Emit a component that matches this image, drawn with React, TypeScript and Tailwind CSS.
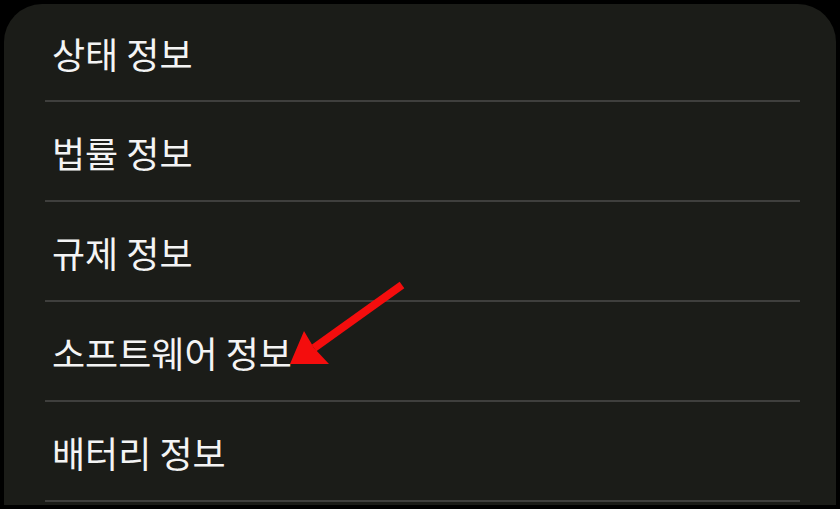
import React from "react";

const items = ["상태 정보", "법률 정보", "규제 정보", "소프트웨어 정보", "배터리 정보"];

export default function App() {
  return (
    <div className="relative w-[840px] h-[509px] bg-black overflow-hidden pt-[4px] pl-[4px]">
      <div className="w-[832px] h-[501px] rounded-t-[38px] bg-[#1b1c18] pl-[41px] pr-[36px]">
        {items.map((t, i) => (
          <div
            key={t}
            className={`flex items-center border-b-2 border-[#3f3f3d] pl-[7px] ${i === 0 ? "h-[98px]" : "h-[100px]"}`}
          >
            <span
              className="text-[36px] leading-none text-[#f4f4f4] pt-[2px]"
              style={{ fontFamily: '"Noto Sans CJK KR", "Noto Sans", sans-serif' }}
            >
              {t}
            </span>
          </div>
        ))}
      </div>
      <svg className="absolute left-0 top-0" width="840" height="509" viewBox="0 0 840 509">
        <line x1="402" y1="285" x2="314" y2="348" stroke="#f40d0d" strokeWidth="8" strokeLinecap="butt" />
        <polygon points="290,364 304,331 314,348 329,364" fill="#f40d0d" />
      </svg>
    </div>
  );
}
